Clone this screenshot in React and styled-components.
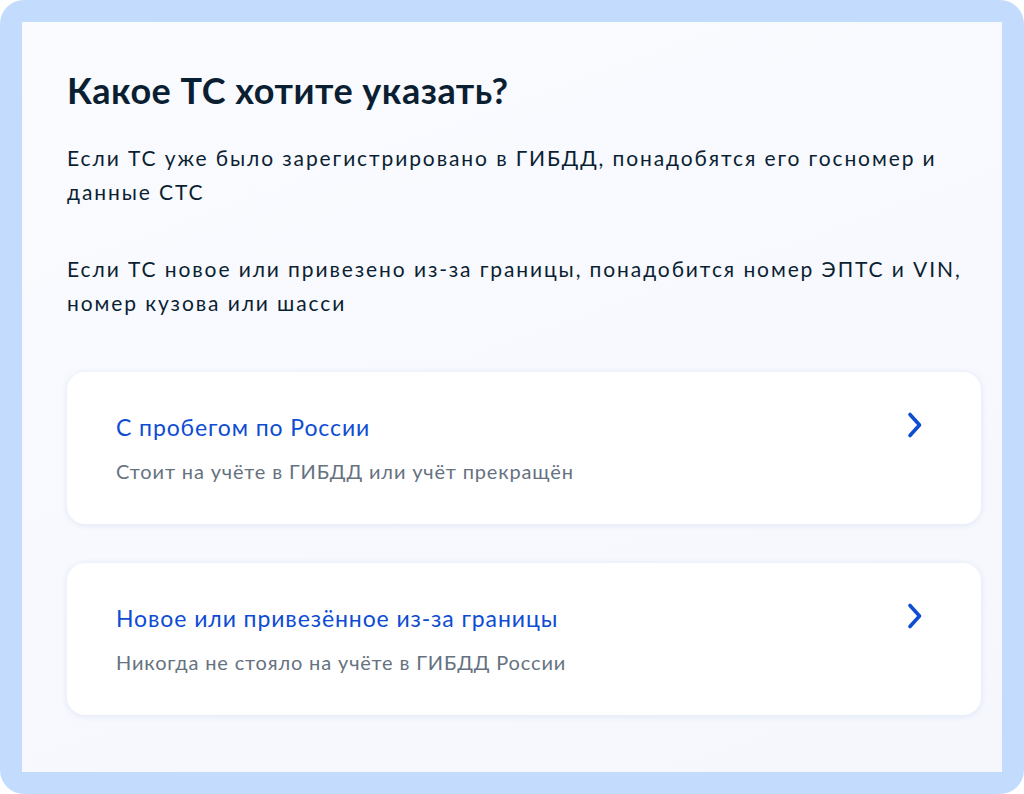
import React from "react";
import styled, { createGlobalStyle } from "styled-components";

const GlobalStyle = createGlobalStyle`
  html, body {
    margin: 0;
    padding: 0;
    background: #ffffff;
  }
  body {
    font-family: Lato, "Noto Sans", sans-serif;
  }
`;

const Frame = styled.div`
  box-sizing: border-box;
  width: 1024px;
  height: 794px;
  padding: 22px;
  border-radius: 24px;
  background: #c3dbfd;
`;

const Panel = styled.div`
  box-sizing: border-box;
  height: 100%;
  padding: 48px 21px 0 45px;
  background: linear-gradient(160deg, #fafbff 0%, #f5f7fd 100%);
  display: flex;
  flex-direction: column;
`;

const Title = styled.h1`
  margin: 0;
  font-size: 36px;
  line-height: 40px;
  letter-spacing: 0.5px;
  font-weight: 700;
  color: #0b1f33;
`;

const Text = styled.p`
  margin: ${(p) => (p.$first ? "31px" : "43px")} 0 0;
  font-size: 21px;
  line-height: 34px;
  letter-spacing: 1.9px;
  color: #0b1f33;
`;

const Cards = styled.div`
  margin-top: 52px;
  display: flex;
  flex-direction: column;
  gap: 39px;
`;

const Card = styled.a`
  box-sizing: border-box;
  height: 152px;
  padding: 0 55px 0 49px;
  background: #ffffff;
  border-radius: 18px;
  box-shadow: 0 1px 6px rgba(180, 195, 230, 0.35);
  display: flex;
  align-items: center;
  justify-content: space-between;
  text-decoration: none;
  cursor: pointer;
`;

const CardBody = styled.div`
  display: flex;
  flex-direction: column;
  gap: 16px;
`;

const CardTitle = styled.span`
  font-size: 23px;
  line-height: 30px;
  letter-spacing: 0.9px;
  color: #0d4cd3;
`;

const CardNote = styled.span`
  font-size: 20px;
  line-height: 26px;
  letter-spacing: 0.85px;
  color: #66727f;
`;

const Chevron = styled.svg`
  width: 24px;
  height: 28px;
  margin-top: -46px;
  flex-shrink: 0;
`;

const Arrow = () => (
  <Chevron viewBox="0 0 24 28" fill="none">
    <path
      d="M8 3.5 L17.5 14 L8 24.5"
      stroke="#0d4cd3"
      strokeWidth="3.6"
      strokeLinecap="round"
      strokeLinejoin="round"
    />
  </Chevron>
);

const options = [
  {
    title: "С пробегом по России",
    note: "Стоит на учёте в ГИБДД или учёт прекращён",
  },
  {
    title: "Новое или привезённое из-за границы",
    note: "Никогда не стояло на учёте в ГИБДД России",
  },
];

export default function App() {
  return (
    <>
      <GlobalStyle />
      <Frame>
        <Panel>
          <Title>Какое ТС хотите указать?</Title>
          <Text $first>
            Если ТС уже было зарегистрировано в ГИБДД, понадобятся его госномер и
            данные СТС
          </Text>
          <Text>
            Если ТС новое или привезено из-за границы, понадобится номер ЭПТС и
            VIN, номер кузова или шасси
          </Text>
          <Cards>
            {options.map((o) => (
              <Card key={o.title}>
                <CardBody>
                  <CardTitle>{o.title}</CardTitle>
                  <CardNote>{o.note}</CardNote>
                </CardBody>
                <Arrow />
              </Card>
            ))}
          </Cards>
        </Panel>
      </Frame>
    </>
  );
}
